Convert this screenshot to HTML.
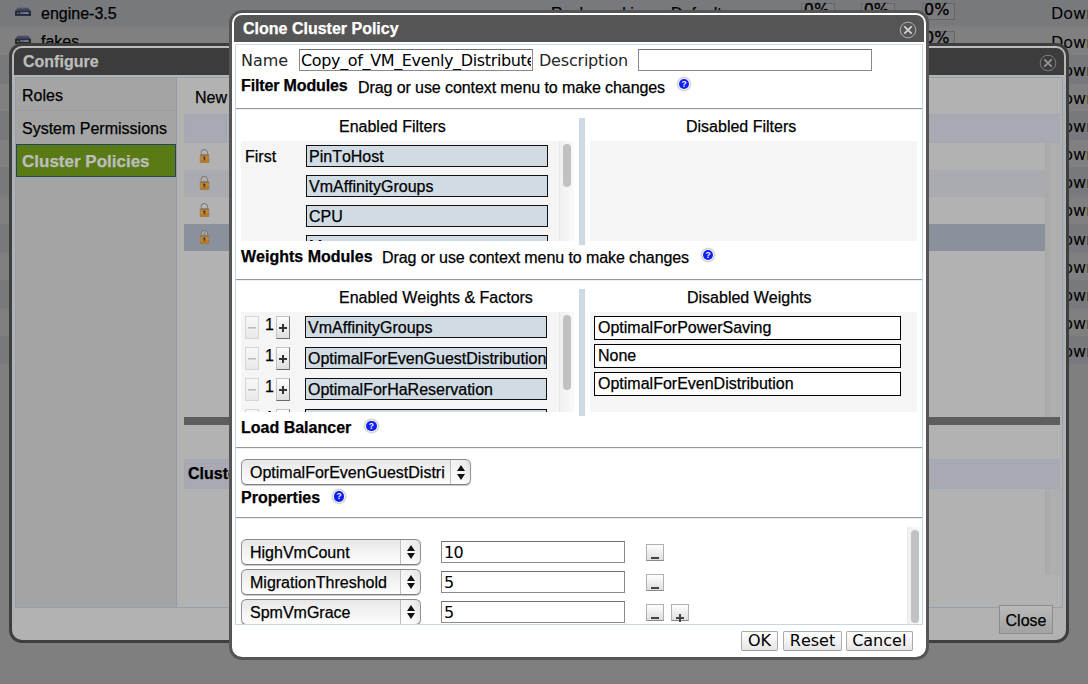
<!DOCTYPE html>
<html>
<head>
<meta charset="utf-8">
<title>Clone Cluster Policy</title>
<style>
*{box-sizing:border-box;margin:0;padding:0}
html,body{width:1088px;height:684px;overflow:hidden}
body{-webkit-text-stroke:0.25px;font-kerning:none;text-rendering:optimizeSpeed;background:#7f7f7f;font-family:"Liberation Sans",sans-serif;font-size:16px;color:#000;position:relative}
.abs{position:absolute}
.dv{font-family:"DejaVu Sans","Liberation Sans",sans-serif;-webkit-text-stroke:0}
.b{font-weight:bold}
.t{position:absolute;white-space:nowrap;line-height:20px;height:20px}
/* background grid */
.row{position:absolute;left:0;width:1088px;height:28px}
.row.o{background:#78797d}
.row.e{background:#808080;border-top:1px solid #7b7b7d}
/* configure dialog */
#cfg{position:absolute;left:9px;top:43px;width:1060px;height:600px;border:3px solid #3e3e3e;border-radius:13px;background:linear-gradient(#bebebe,#b9b9b9 6px,#b2b2b2 40px)}
#cfgt{position:absolute;left:2px;top:2px;right:2px;height:27px;background:#3c3c3c;border-radius:8px 8px 0 0}
/* main dialog */
#dlg{position:absolute;left:229px;top:10px;width:700px;height:650px;border:3px solid #555;border-radius:13px;background:#fff}
#dlgt{position:absolute;left:2px;top:2px;right:2px;height:27px;background:#555;border-radius:8px 8px 0 0}
.hr{position:absolute;left:236px;width:686px;height:2px;background:linear-gradient(#979797 50%,#efefef 50%)}
.panel{position:absolute;background:#f5f5f5}
.fi{position:absolute;height:22px;border:1px solid #111;background:#d1dbe4;line-height:22px;padding-left:2px;white-space:nowrap;overflow:hidden}
.wi{position:absolute;height:23.5px;border:1px solid #000;background:#fff;line-height:21px;padding-left:3px;white-space:nowrap;overflow:hidden;left:594px;width:306.5px}
.inp{letter-spacing:-0.6px;position:absolute;height:22px;border:1px solid #8a8a8a;border-top-color:#6e6e6e;background:#fff;line-height:22px;padding-left:2px;white-space:nowrap;overflow:hidden}
.sel{position:absolute;height:25.6px;border:1px solid #959595;border-top-color:#8a8a8a;border-bottom-color:#7e7e7e;border-radius:5.5px;background:linear-gradient(#e7e7e7,#f3f3f3 50%,#fdfdfd);line-height:25.4px;padding-left:8px;white-space:nowrap;overflow:hidden;box-shadow:0 1px 1px rgba(0,0,0,.22)}
.sel i{position:absolute;right:0;top:0;bottom:0;width:20.5px;border-left:1px solid #bdbdbd;background:linear-gradient(90deg,rgba(255,255,255,.5),rgba(255,255,255,.2) 60%,rgba(0,0,0,.04))}
.sel i:before{content:"";position:absolute;left:6.6px;top:5.2px;border:4px solid transparent;border-top:0;border-bottom:6.2px solid #111}
.sel i:after{content:"";position:absolute;left:6.6px;top:13.4px;border:4px solid transparent;border-bottom:0;border-top:6.2px solid #111}
.pm{position:absolute;width:14px;height:22.5px;border:1px solid #c4c4c4;border-bottom-color:#6a6a6a;border-right-color:#7a7a7a;background:linear-gradient(#333,#333) 50% 50%/8px 2px no-repeat,linear-gradient(#333,#333) 50% 50%/2px 8px no-repeat,linear-gradient(#fdfdfd,#dedede);font-size:0;color:transparent}
.help{position:absolute;width:10.8px;height:10.8px;border-radius:50%;background:#0f1df6;color:#f4f4ff;font-size:8.5px;font-weight:bold;line-height:10.4px;text-align:center;-webkit-text-stroke:0;box-shadow:0 0 0 .8px #fff,0 0 1.2px 2.2px rgba(0,0,0,.2)}
.btn{position:absolute;top:631px;height:20px;border:1px solid #ababab;border-bottom-color:#9a9a9a;border-radius:2px;background:linear-gradient(#fff,#e6e6e6);line-height:18px;text-align:center}
.pm.dis{border-color:#d6d6d6;background:linear-gradient(#bdbdbd,#bdbdbd) 50% 50%/8px 1.6px no-repeat,linear-gradient(#f8f8f8,#e9e9e9)}
.mb{position:absolute;width:18px;height:17px;border:1px solid #b0b0b0;border-bottom-color:#8a8a8a;background:linear-gradient(#fff,#dedede)}
.mb b{position:absolute;left:4px;top:12px;width:8px;height:2px;background:#444}
.mb b.p:after{content:"";position:absolute;left:3px;top:-3px;width:2px;height:8px;background:#444}
.pc{position:absolute;width:33.4px;height:17.2px;border:1px solid #6c6c70;background:#7c7c7f;line-height:20px;white-space:nowrap;overflow:visible;padding-left:3px}
.pc{line-height:11px;color:#000;padding-left:1.5px;-webkit-text-stroke:0.3px;border-color:#66666a}
.lock{position:absolute;width:11px;height:14px}
</style>
</head>
<body>
<svg width="0" height="0" style="position:absolute"><defs>
<g id="lk"><path d="M2.3 6.3V3.9a3.1 3.3 0 0 1 6.2 0v2.4" fill="none" stroke="#7a7a7a" stroke-width="1.1"/><path d="M3.2 6.3V4.1a2.2 2.4 0 0 1 4.4 0v2.2" fill="none" stroke="#c4c4c4" stroke-width=".7"/><rect x="1.25" y="5.6" width="8.6" height="8.2" rx=".7" fill="#bd7a1f" stroke="#8b7358" stroke-width="0.7"/><rect x="1.3" y="6" width="8.5" height="1" fill="#6f737c" opacity=".55"/><path d="M1.4 7.2h8.3v2.6q-4 0-8.3 2z" fill="#d09a45" opacity=".45"/><path d="M4.75 7.4h1.2v.75h.8v1.2h-.8v1.9h-1.2v-1.9h-.9v-1.2h.9z" fill="#3a3e4e"/></g>
<g id="hs"><path d="M3 .85h9.8L16 4.1H0z" fill="#3b405c"/><path d="M3.4 1.1h9l1.3 1.2H2.2z" fill="#4d536a"/><rect x="0" y="4.05" width="16" height="4.85" fill="#23264c"/><rect x="1.3" y="4.4" width="13.9" height="3.3" fill="#2a2a30"/><rect x="1.9" y="4.95" width="2.2" height=".95" fill="#a80c0c"/><rect x="1.9" y="5.95" width="2.2" height="1.05" fill="#0aa01a"/><rect x="5.1" y="5.2" width="3.95" height="1.65" fill="#6d7698"/><rect x="9.05" y="5.2" width="4.65" height="1.65" fill="#8c8c8c"/></g>
</defs></svg>
<!-- background rows -->
<div id="bg">
<div class="row o" style="top:-2px"></div>
<div class="row e" style="top:27px"></div>
<div class="row o" style="top:55px"></div>
<div class="row e" style="top:83px"></div>
<div class="row o" style="top:111px"></div>
<div class="row e" style="top:139px"></div>
<div class="row o" style="top:167px"></div>
<div class="row e" style="top:196px"></div>
<div class="row o" style="top:224px"></div>
<div class="row e" style="top:252px"></div>
<div class="row o" style="top:280px"></div>
<div class="row e" style="top:308px"></div>
<div class="row o" style="top:336px"></div>
</div>

<div class="t dv" style="left:1051px;top:4.4px">Down</div>
<div class="t dv" style="left:1051px;top:32.5px">Down</div>
<div class="t dv" style="left:1051px;top:60.7px">Down</div>
<div class="t dv" style="left:1051px;top:88.8px">Down</div>
<div class="t dv" style="left:1051px;top:117.0px">Down</div>
<div class="t dv" style="left:1051px;top:145.2px">Down</div>
<div class="t dv" style="left:1051px;top:173.3px">Down</div>
<div class="t dv" style="left:1051px;top:201.4px">Down</div>
<div class="t dv" style="left:1051px;top:229.6px">Down</div>
<div class="t dv" style="left:1051px;top:257.8px">Down</div>
<div class="t dv" style="left:1051px;top:285.9px">Down</div>
<div class="t dv" style="left:1051px;top:314.0px">Down</div>
<div class="t dv" style="left:1051px;top:342.2px">Down</div>
<div class="pc dv" style="left:801.3px;top:3.3px">0%</div>
<div class="pc dv" style="left:861.2px;top:3.3px">0%</div>
<div class="pc dv" style="left:921.6px;top:3.3px">0%</div>
<div class="pc dv" style="left:801.3px;top:31.3px">0%</div>
<div class="pc dv" style="left:861.2px;top:31.3px">0%</div>
<div class="pc dv" style="left:921.6px;top:31.3px">0%</div>
<div class="t" style="left:551px;top:4px">Rack_working</div>
<div class="t" style="left:671px;top:4px">Default</div>
<svg class="abs" style="left:15px;top:7px;width:16px;height:10px" viewBox="0 0 16 10"><use href="#hs"/></svg>
<svg class="abs" style="left:15px;top:35px;width:16px;height:10px" viewBox="0 0 16 10"><use href="#hs"/></svg>
<div class="t" style="left:41px;top:4px">engine-3.5</div>
<div class="t" style="left:41px;top:32px">fakes</div>

<!-- Configure dialog -->
<div id="cfg"><div id="cfgt"></div></div>
<div class="t b" style="left:23px;top:52px;color:#bdbdbd">Configure</div>
<!-- configure content -->
<div class="abs" style="left:15px;top:77px;width:1048px;height:531px;border:1px solid #95a1a9"></div>
<div class="abs" style="left:16px;top:78px;width:161px;height:529px;background:#a4a4a4;border-right:1px solid #929ca2"></div>
<div class="abs" style="left:16px;top:110px;width:160px;height:1px;background:#9c9c9c"></div>
<div class="t" style="left:22px;top:86px">Roles</div>
<div class="t" style="left:22px;top:119px">System Permissions</div>
<div class="abs" style="left:16px;top:144px;width:160px;height:33px;background:#5a7a16;border:1px solid #24465a"></div>
<div class="t b" style="left:22px;top:152px;color:#bdbdbd;font-size:17px">Cluster Policies</div>
<div class="t" style="left:195px;top:88px">New</div>
<div class="abs" style="left:184px;top:114px;width:876px;height:29px;background:#a8a9b3;border:1px solid #a0aab3"></div>
<div class="abs" style="left:226px;top:115px;width:1px;height:27px;background:#9ca6b0"></div><div class="abs" style="left:227px;top:115px;width:1px;height:27px;background:#b1b2bb"></div>
<div class="abs" style="left:184px;top:170px;width:861px;height:27px;background:#a9abb0"></div>
<div class="abs" style="left:184px;top:224px;width:861px;height:27px;background:#8a919c"></div>
<div class="abs" style="left:1045px;top:143px;width:15px;height:274px;background:linear-gradient(90deg,#a9a9a9,#b0b0b0 60%,#acacac)"></div>
<div class="abs" style="left:184px;top:417px;width:876px;height:8px;background:#5e5e5e"></div>
<div class="abs" style="left:184px;top:459px;width:876px;height:30px;background:#a8a9b3;border:1px solid #a0aab3"></div>
<div class="t b" style="left:188px;top:464px">Cluster</div>
<div class="abs" style="left:1045px;top:489px;width:15px;height:86px;background:linear-gradient(90deg,#a9a9a9,#b0b0b0 60%,#acacac)"></div>
<svg class="lock" style="left:199.2px;top:148.7px" viewBox="0 0 11 14"><use href="#lk"/></svg>
<svg class="lock" style="left:199.2px;top:175.7px" viewBox="0 0 11 14"><use href="#lk"/></svg>
<svg class="lock" style="left:199.2px;top:202.7px" viewBox="0 0 11 14"><use href="#lk"/></svg>
<svg class="lock" style="left:199.2px;top:229.7px" viewBox="0 0 11 14"><use href="#lk"/></svg>
<div class="abs" style="left:999px;top:605px;width:54px;height:29px;border:1px solid #8c8c8c;background:linear-gradient(#bababa,#a2a2a2);line-height:27px;text-align:center;padding-top:1px">Close</div>
<svg class="abs" style="left:1039px;top:54px;width:18px;height:18px" viewBox="0 0 18 18"><circle cx="9" cy="9" r="7.8" fill="none" stroke="#858585" stroke-width="0.9"/><path d="M5.3 5.3l7.4 7.4M12.7 5.3l-7.4 7.4" stroke="#989898" stroke-width="1.7"/></svg>

<!-- Main dialog -->
<div id="dlg"><div id="dlgt"></div></div>
<div class="abs" style="left:235px;top:44px;width:688px;height:581px;border:1px solid #c9d6e0"></div>
<svg class="abs" style="left:899px;top:21px;width:18px;height:18px" viewBox="0 0 18 18"><circle cx="9" cy="9" r="7.8" fill="none" stroke="#b9b9b9" stroke-width="0.9"/><path d="M5.3 5.3l7.4 7.4M12.7 5.3l-7.4 7.4" stroke="#d4d4d4" stroke-width="1.7"/></svg>
<div class="t b" style="left:243px;top:19px;color:#fff">Clone Cluster Policy</div>

<div class="t dv" style="left:241px;top:51px;color:#262626">Name</div>
<div class="inp dv" style="left:299px;top:49px;width:234px;letter-spacing:-0.36px;padding-left:1px"><span style="display:block;overflow:hidden;width:230px">Copy_of_VM_Evenly_Distributed</span></div>
<div class="t dv" style="left:539px;top:51px;letter-spacing:-0.2px;color:#262626">Description</div>
<div class="inp dv" style="left:638px;top:49px;width:234px"></div>

<div class="t b" style="left:241px;top:76px;letter-spacing:-0.14px">Filter Modules</div>
<div class="t" style="left:358px;top:78px;letter-spacing:-0.085px">Drag or use context menu to make changes</div>
<div class="help" style="left:678.6px;top:78.5px">?</div>
<div class="hr" style="top:108px"></div>

<div class="t" style="left:339px;top:117px">Enabled Filters</div>
<div class="t" style="left:686px;top:117px">Disabled Filters</div>

<div class="panel" style="left:241px;top:141px;width:333px;height:100px;overflow:hidden">
<div class="t" style="left:4px;top:6px">First</div>
<div class="fi" style="left:65px;top:4px;width:242px">PinToHost</div>
<div class="fi" style="left:65px;top:34px;width:242px">VmAffinityGroups</div>
<div class="fi" style="left:65px;top:64px;width:242px">CPU</div>
<div class="fi" style="left:65px;top:94px;width:242px">Memory</div>
<div class="abs" style="left:318px;top:0;width:15px;height:100px;background:linear-gradient(90deg,#f0f0f0,#fafafa);border-left:1px solid #e6e6e6"></div>
<div class="abs" style="left:322px;top:3px;width:8px;height:43px;border-radius:4px;background:#c1c1c1"></div>
</div>
<div class="abs" style="left:579px;top:118px;width:6px;height:127px;background:#cdd9e3"></div>
<div class="panel" style="left:590px;top:141px;width:327px;height:100px"></div>
<div class="t b" style="left:241px;top:247px">Weights Modules</div>
<div class="t" style="left:382px;top:248px;letter-spacing:-0.085px">Drag or use context menu to make changes</div>
<div class="help" style="left:702.6px;top:249.6px">?</div>
<div class="hr" style="top:279px"></div>

<div class="t" style="left:339px;top:288px">Enabled Weights &amp; Factors</div>
<div class="t" style="left:687px;top:288px">Disabled Weights</div>

<div class="panel" style="left:241px;top:312px;width:333px;height:100px;overflow:hidden">
<div class="pm dis" style="left:4px;top:4.3px">&#8722;</div><div class="t" style="left:24px;top:3px">1</div><div class="pm" style="left:34.6px;top:4.3px">+</div><div class="fi" style="left:64px;top:4px;width:242px">VmAffinityGroups</div>
<div class="pm dis" style="left:4px;top:35.3px">&#8722;</div><div class="t" style="left:24px;top:34px">1</div><div class="pm" style="left:34.6px;top:35.3px">+</div><div class="fi" style="left:64px;top:35px;width:242px">OptimalForEvenGuestDistribution</div>
<div class="pm dis" style="left:4px;top:66.3px">&#8722;</div><div class="t" style="left:24px;top:65px">1</div><div class="pm" style="left:34.6px;top:66.3px">+</div><div class="fi" style="left:64px;top:66px;width:242px">OptimalForHaReservation</div>
<div class="pm dis" style="left:4px;top:97.3px">&#8722;</div><div class="t" style="left:24px;top:96px">1</div><div class="pm" style="left:34.6px;top:97.3px">+</div><div class="fi" style="left:64px;top:97px;width:242px">OptimalForEvenDistribution</div>
<div class="abs" style="left:318px;top:0;width:15px;height:100px;background:linear-gradient(90deg,#f0f0f0,#fafafa);border-left:1px solid #e6e6e6"></div>
<div class="abs" style="left:322px;top:3px;width:8px;height:75px;border-radius:4px;background:#c1c1c1"></div>
</div>
<div class="abs" style="left:579px;top:289px;width:6px;height:127px;background:#cdd9e3"></div>
<div class="panel" style="left:590px;top:312px;width:327px;height:100px"></div>
<div class="wi" style="top:316.2px">OptimalForPowerSaving</div>
<div class="wi" style="top:344.1px">None</div>
<div class="wi" style="top:372px">OptimalForEvenDistribution</div>
<div class="t b" style="left:241px;top:418px">Load Balancer</div>
<div class="help" style="left:365.9px;top:420.6px">?</div>
<div class="hr" style="top:447px"></div>

<div class="sel" style="left:241px;top:459.3px;width:230px">OptimalForEvenGuestDistri<i></i></div>

<div class="t b" style="left:241px;top:488px">Properties</div>
<div class="help" style="left:333.6px;top:490.9px">?</div>
<div class="hr" style="top:517px"></div>

<div class="abs" style="left:236px;top:518px;width:686px;height:107px;overflow:hidden;border-bottom:1px solid #c9d6e0">
<div class="sel" style="left:5px;top:21px;width:180px">HighVmCount<i></i></div><div class="inp dv" style="left:205px;top:23px;width:184px">10</div><div class="mb" style="left:410px;top:26px"><b></b></div>
<div class="sel" style="left:5px;top:51px;width:180px">MigrationThreshold<i></i></div><div class="inp dv" style="left:205px;top:53px;width:184px">5</div><div class="mb" style="left:410px;top:56px"><b></b></div>
<div class="sel" style="left:5px;top:81px;width:180px">SpmVmGrace<i></i></div><div class="inp dv" style="left:205px;top:83px;width:184px">5</div><div class="mb" style="left:410px;top:86px"><b></b></div>
<div class="mb" style="left:435px;top:86px"><b class="p"></b></div>
<div class="abs" style="left:671px;top:9px;width:15px;height:100px;background:linear-gradient(90deg,#f0f0f0,#fafafa);border-left:1px solid #ececec"></div>
<div class="abs" style="left:675px;top:12px;width:8px;height:93px;border-radius:4px;background:#c1c1c1"></div>
</div>
<div class="btn dv" style="left:741px;width:37px">OK</div>
<div class="btn dv" style="left:783px;width:59px">Reset</div>
<div class="btn dv" style="left:846px;width:66.5px">Cancel</div>

</body>
</html>
